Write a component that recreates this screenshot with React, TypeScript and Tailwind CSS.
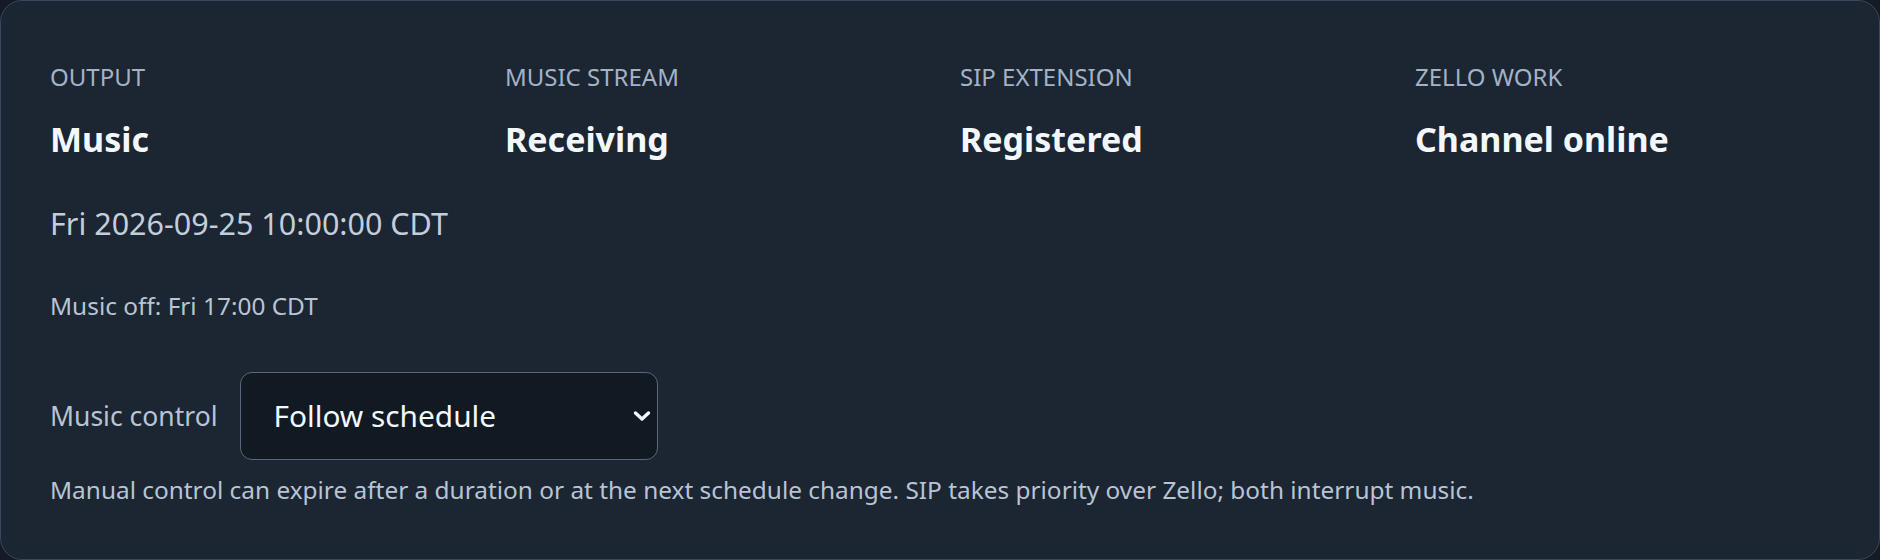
import React from "react";

const stats = [
  { label: "OUTPUT", value: "Music" },
  { label: "MUSIC STREAM", value: "Receiving" },
  { label: "SIP EXTENSION", value: "Registered" },
  { label: "ZELLO WORK", value: "Channel online" },
];

export default function App() {
  return (
    <div className="h-[560px] w-full bg-[#141b26] font-['Noto_Sans',sans-serif]">
      <section className="h-full rounded-[22px] border border-[#3a475a] bg-[#1c2532] px-[49px] pt-[60px]">
        <div className="grid grid-cols-4 gap-[40px]">
          {stats.map((s) => (
            <div key={s.label}>
              <div className="text-[24px] leading-[32px] text-[#a3b3c7]">{s.label}</div>
              <div className="mt-[24px] text-[34px] font-bold leading-[44px] text-[#f3f7ff]">{s.value}</div>
            </div>
          ))}
        </div>

        <div className="mt-[44px] text-[30.5px] leading-[36px] text-[#c3cedb]">Fri 2026-09-25 10:00:00 CDT</div>

        <div className="mt-[50px] text-[24.4px] leading-[30px] text-[#b8c4d4]">Music off: Fri 17:00 CDT</div>

        <div className="mt-[51px] flex items-center gap-[22px]">
          <label className="text-[26.5px] leading-[32px] text-[#b8c4d4]">Music control</label>
          <div className="relative">
            <select
              defaultValue="schedule"
              className="h-[88px] w-[418px] appearance-none rounded-[12px] border border-[#5a6679] bg-[#111922] pl-[33px] pr-[40px] text-[29.8px] text-[#f3f7ff] outline-none"
            >
              <option value="schedule">Follow schedule</option>
              <option value="on">Music on</option>
              <option value="off">Music off</option>
            </select>
            <svg
              className="pointer-events-none absolute right-[7px] top-1/2 h-[12px] w-[18px] -translate-y-1/2"
              viewBox="0 0 18 12"
              fill="none"
              stroke="#f3f7ff"
              strokeWidth="3.4"
              strokeLinecap="round"
              strokeLinejoin="round"
            >
              <path d="M2.5 3 L9 9 L15.5 3" />
            </svg>
          </div>
        </div>

        <p className="mt-[15px] text-[24.4px] leading-[30px] text-[#b8c4d4]">
          Manual control can expire after a duration or at the next schedule change. SIP takes priority over Zello; both
          interrupt music.
        </p>
      </section>
    </div>
  );
}
